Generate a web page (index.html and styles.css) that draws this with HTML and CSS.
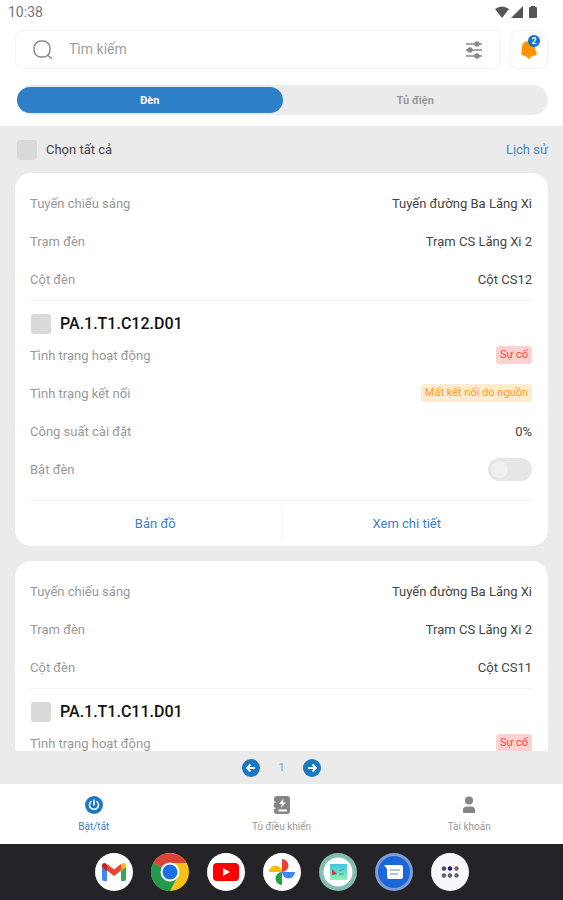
FILE: index.html
```html
<!DOCTYPE html>
<html lang="vi">
<head>
    <meta charset="UTF-8">
    <meta name="viewport" content="width=device-width, initial-scale=1.0">
    <title>Bật/tắt đèn</title>
    <link rel="stylesheet" href="styles.css">
</head>
<body>

    <!-- Status bar -->
    <div class="status-bar">
        <span>10:38</span>
        <div class="status-icons">
            <svg width="14" height="12" viewBox="0 0 14 12"><path d="M0 3Q7-2 14 3L7 12Z" fill="#555"/></svg>
            <svg width="12" height="12" viewBox="0 0 12 12"><path d="M12 0V12H0Z" fill="#555"/></svg>
            <svg class="battery" width="8" height="12" viewBox="0 0 8 12"><path d="M2 0H6V1H7Q8 1 8 2V11Q8 12 7 12H1Q0 12 0 11V2Q0 1 1 1H2Z" fill="#555"/></svg>
        </div>
    </div>

    <header class="header">
        <div class="search-row">
            <div class="search-box">
                <svg width="20" height="20" viewBox="0 0 20 20" fill="none" stroke="#888" stroke-width="1.4" stroke-linecap="round"><rect x="1" y="1" width="16" height="16" rx="7"/><path d="M15 15.500L18.500 18.500"/></svg>
                <input type="text" class="search-input" placeholder="Tìm kiếm" aria-label="Tìm kiếm">
                <button class="icon-btn" aria-label="Bộ lọc">
                    <svg width="18" height="18" viewBox="0 0 18 18" stroke="#888" stroke-width="1.400" fill="#888"><path d="M1 3H17M1 9H17M1 15H17"/><circle cx="12" cy="3" r="2"/><circle cx="5" cy="9" r="2"/><circle cx="12" cy="15" r="2"/></svg>
                </button>
            </div>
            <button class="bell-btn" aria-label="Thông báo">
                <svg width="16" height="18" viewBox="0 0 16 18"><path d="M8 0C12 0 14 2 14 5V8L15.500 11V14L11.500 15L8 18L4.500 15L.5 14V11L1 6C1.500 2 4 0 8 0Z" fill="#ff9300"/></svg>
                <span class="badge">2</span>
            </button>
        </div>
        <div class="tabs">
            <button class="tab active">Đèn</button>
            <button class="tab">Tủ điện</button>
        </div>
    </header>

    <main class="content">
        <div class="select-row">
            <input type="checkbox" class="check" id="selectAll">
            <label for="selectAll">Chọn tất cả</label>
            <a href="#" class="history-link">Lịch sử</a>
        </div>

        <div class="card">
            <div class="row"><span>Tuyến chiếu sáng</span><span class="value">Tuyến đường Ba Lăng Xi</span></div>
            <div class="row"><span>Trạm đèn</span><span class="value">Trạm CS Lăng Xi 2</span></div>
            <div class="row"><span>Cột đèn</span><span class="value">Cột CS12</span></div>
            <div class="lamp-name">
                <input type="checkbox" class="check" id="lamp12">
                <label for="lamp12">PA.1.T1.C12.D01</label>
            </div>
            <div class="row"><span>Tình trạng hoạt động</span><span class="tag tag-error">Sự cố</span></div>
            <div class="row"><span>Tình trạng kết nối</span><span class="tag tag-warning">Mất kết nối do nguồn</span></div>
            <div class="row"><span>Công suất cài đặt</span><span class="value">0%</span></div>
            <div class="row"><label for="switch12">Bật đèn</label><input type="checkbox" class="switch" id="switch12"></div>
            <div class="card-actions">
                <button>Bản đồ</button>
                <button>Xem chi tiết</button>
            </div>
        </div>

        <div class="card">
            <div class="row"><span>Tuyến chiếu sáng</span><span class="value">Tuyến đường Ba Lăng Xi</span></div>
            <div class="row"><span>Trạm đèn</span><span class="value">Trạm CS Lăng Xi 2</span></div>
            <div class="row"><span>Cột đèn</span><span class="value">Cột CS11</span></div>
            <div class="lamp-name">
                <input type="checkbox" class="check" id="lamp11">
                <label for="lamp11">PA.1.T1.C11.D01</label>
            </div>
            <div class="row"><span>Tình trạng hoạt động</span><span class="tag tag-error">Sự cố</span></div>
        </div>
    </main>

    <!-- Pagination -->
    <div class="pagination">
        <button class="icon-btn" aria-label="Trang trước">
            <svg width="18" height="18" viewBox="0 0 18 18"><circle cx="9" cy="9" r="9" fill="#1a78c2"/><path d="M13 9H5.500M8.500 5.500L5 9L8.500 12.500" fill="none" stroke="#fff" stroke-width="1.800"/></svg>
        </button>
        <span>1</span>
        <button class="icon-btn" aria-label="Trang sau">
            <svg width="18" height="18" viewBox="0 0 18 18"><circle cx="9" cy="9" r="9" fill="#1a78c2"/><path d="M5 9H12.500M9.500 5.500L13 9L9.500 12.500" fill="none" stroke="#fff" stroke-width="1.800"/></svg>
        </button>
    </div>

    <nav class="bottom-nav">
        <a href="#" class="nav-item active">
            <svg width="18" height="18" viewBox="0 0 18 18"><circle cx="9" cy="9" r="9" fill="#1a78c2"/><path d="M9 4V9M6 5.500A4.500 4.500 0 1 0 12 5.500" fill="none" stroke="#fff" stroke-width="1.600" stroke-linecap="round"/></svg>
            Bật/tắt
        </a>
        <a href="#" class="nav-item">
            <svg width="18" height="18" viewBox="0 0 18 18"><path d="M4 0H14Q17 0 17 3V15Q17 18 14 18H4Q1 18 1 15V13H2.500V11.500H1V7H2.500V5.500H1V3Q1 0 4 0Z" fill="#858585"/><path d="M10.500 2.500L6 8H9L8 12L13 6.500H10Z" fill="#fff"/><path d="M5.500 14.500H14" stroke="#fff" stroke-width="2"/></svg>
            Tủ điều khiển
        </a>
        <a href="#" class="nav-item">
            <svg width="18" height="18" viewBox="0 0 18 18" fill="#858585"><circle cx="9" cy="4.500" r="4"/><path d="M3 16V14Q3 10.500 7 10.500H11Q15 10.500 15 14V16Q15 17 14 17H4Q3 17 3 16Z"/></svg>
            Tài khoản
        </a>
    </nav>

    <!-- System dock -->
    <div class="dock">
        <button class="app" aria-label="Gmail">
            <svg viewBox="0 0 38 38"><circle cx="19" cy="19" r="19" fill="#fff"/><path d="M7 14V26Q7 28 9 28H12V16Z" fill="#4285f4"/><path d="M26 16V28H29Q31 28 31 26V14Z" fill="#34a853"/><path d="M26 12V18L31 14V12Q30 9 27 10.500Z" fill="#fbbc04"/><path d="M12 12V18L7 14V12Q8 9 11 10.500Z" fill="#c5221f"/><path d="M12 11L19 16.500L26 11V17.500L19 23L12 17.500Z" fill="#ea4335"/></svg>
        </button>
        <button class="app" aria-label="Chrome">
            <svg viewBox="0 0 38 38"><circle cx="19" cy="19" r="19" fill="#fbc116"/><path d="M19 19L2.500 9.500A19 19 0 0 0 19 38L27 23Z" fill="#229a4c"/><path d="M19 19L2.500 9.500A19 19 0 0 1 35.500 10H19Z" fill="#db4437"/><circle cx="19" cy="19" r="9.500" fill="#fff"/><circle cx="19" cy="19" r="7.500" fill="#1a6fe8"/></svg>
        </button>
        <button class="app" aria-label="YouTube">
            <svg viewBox="0 0 38 38"><circle cx="19" cy="19" r="19" fill="#fff"/><rect x="6" y="10" width="26" height="18" rx="4" fill="#f00"/><path d="M16 15L23 19L16 23Z" fill="#fff"/></svg>
        </button>
        <button class="app" aria-label="Google Photos">
            <svg viewBox="0 0 38 38"><circle cx="19" cy="19" r="19" fill="#fff"/><path d="M19 6A6.500 6.500 0 0 1 19 19Z" fill="#ea4335"/><path d="M32 19A6.500 6.500 0 0 1 19 19Z" fill="#4285f4"/><path d="M19 32A6.500 6.500 0 0 1 19 19Z" fill="#1ea446"/><path d="M6 19A6.500 6.500 0 0 1 19 19Z" fill="#fbbc04"/></svg>
        </button>
        <button class="app" aria-label="Chiếu sáng">
            <svg viewBox="0 0 38 38"><defs><linearGradient id="sky" x2="0" y2="1"><stop offset="0" stop-color="#3fc3dc"/><stop offset="1" stop-color="#8ef5b4"/></linearGradient></defs><circle cx="19" cy="19" r="19" fill="#83bdb2"/><circle cx="19" cy="19" r="14.500" fill="#fff"/><rect x="11" y="11" width="17" height="16" fill="url(#sky)"/><path d="M13 16L18 21L13 22Z" fill="#c33a3d"/><path d="M20 18L25 16M20 21H25" stroke="#5a9c8a" fill="none"/></svg>
        </button>
        <button class="app" aria-label="Tin nhắn">
            <svg viewBox="0 0 38 38"><circle cx="19" cy="19" r="19" fill="#7b9fd0"/><circle cx="19" cy="19" r="16" fill="#1b66d9"/><path d="M9 12H26Q28 12 28 14V24Q28 26 26 26H14Q12 26 12 24V16Z" fill="#fff"/><path d="M15 17H25M15 21H23" stroke="#8aaeea" stroke-width="1.500"/></svg>
        </button>
        <button class="app" aria-label="Tất cả ứng dụng">
            <svg viewBox="0 0 38 38"><circle cx="19" cy="19" r="19" fill="#f8f7fd"/><g fill="#62606f"><circle cx="13" cy="15.500" r="2.200" fill="#3f4a7c"/><circle cx="19" cy="15.500" r="2.200" fill="#1c1c78"/><circle cx="25.500" cy="15.500" r="2.200" fill="#85566a"/><circle cx="13" cy="22.500" r="2.200"/><circle cx="19" cy="22.500" r="2.200"/><circle cx="25.500" cy="22.500" r="2.200"/></g></svg>
        </button>
    </div>

</body>
</html>
```
FILE: styles.css
```css
* {
    box-sizing: border-box;
}

body {
    font-family: Roboto, Arial, sans-serif;
    font-size: 13px;
    color: #444444;
    background-color: #ffffff;
    margin: 0;
    height: 100vh;
    display: flex;
    flex-direction: column;
}

button, input {
    font-family: inherit;
    font-size: inherit;
    margin: 0;
    padding: 0;
    border: none;
    background: none;
}

button {
    cursor: pointer;
}

a {
    text-decoration: none;
}

svg {
    display: block;
}

.status-bar {
    display: flex;
    justify-content: space-between;
    align-items: center;
    height: 24px;
    padding: 0 26px 0 8px;
    font-size: 14px;
    color: #777777;
}

.status-icons {
    display: flex;
    gap: 2px;
}

.battery {
    margin-left: 4px;
}

/* Search and tabs */
.header {
    padding: 6px 15px 11px;
}

.search-row {
    display: flex;
    gap: 9px;
}

.search-box {
    flex: 1;
    display: flex;
    align-items: center;
    gap: 16px;
    height: 39px;
    padding: 0 17px;
    border: 1px solid #f3f3f3;
    border-radius: 8px;
}

.search-input {
    flex: 1;
    min-width: 0;
    padding-bottom: 2px;
    outline: none;
    font-size: 14px;
}

.search-input::placeholder {
    color: #a0a0a0;
}

.bell-btn {
    position: relative;
    display: flex;
    align-items: center;
    justify-content: center;
    width: 38px;
    height: 39px;
    border: 1px solid #f3f3f3;
    border-radius: 8px;
}

.badge {
    position: absolute;
    top: 4px;
    right: 7px;
    width: 12px;
    height: 12px;
    border-radius: 50%;
    background-color: #1a6fc4;
    color: #ffffff;
    font-size: 9px;
    font-weight: bold;
    line-height: 12px;
    text-align: center;
}

.tabs {
    display: flex;
    height: 30px;
    margin: 16px 0 0 2px;
    border-radius: 15px;
    background-color: #ebebeb;
}

.tab {
    flex: 1;
    border-radius: 15px;
    font-size: 11px;
    font-weight: bold;
    color: #999999;
}

.tab.active {
    margin: 2px 0;
    background-color: #2d80c8;
    color: #ffffff;
}

/* Lamp list */
.content {
    flex: 1;
    min-height: 0;
    overflow: hidden;
    padding: 0 15px;
    background-color: #ebebeb;
}

.select-row {
    display: flex;
    align-items: center;
    gap: 9px;
    height: 47px;
    padding-left: 2px;
}

.history-link {
    margin-left: auto;
    color: #4a86cc;
}

.check {
    appearance: none;
    width: 20px;
    height: 20px;
    border-radius: 3px;
    background-color: #d9d9d9;
}

.check:checked {
    background-color: #2d80c8;
}

.card {
    margin-bottom: 15px;
    padding: 11px 16px 0 15px;
    border-radius: 16px;
    background-color: #ffffff;
}

.row {
    display: flex;
    justify-content: space-between;
    align-items: center;
    height: 38px;
    color: #999999;
}

.value {
    color: #444444;
}

.lamp-name {
    display: flex;
    align-items: center;
    gap: 9px;
    height: 36px;
    margin-top: 2px;
    padding: 10px 0 0 1px;
    border-top: 1px solid #f3f3f3;
    font-size: 16px;
    font-weight: 500;
    color: #111111;
}

.tag {
    padding: 0 4px;
    border-radius: 3px;
    font-size: 11px;
    line-height: 18px;
}

.tag-error {
    background-color: #ffd2d2;
    color: #ff4444;
}

.tag-warning {
    background-color: #ffebd0;
    color: #ff9a1f;
}

.switch {
    appearance: none;
    width: 44px;
    height: 23px;
    padding: 3px;
    border-radius: 12px;
    background-color: #e6e6e6;
}

.switch::before {
    content: "";
    display: block;
    width: 17px;
    height: 17px;
    border-radius: 50%;
    background-color: #f0f0f0;
}

.switch:checked {
    background-color: #2d80c8;
}

.card-actions {
    display: flex;
    height: 46px;
    margin-top: 12px;
    border-top: 1px solid #f3f3f3;
}

.card-actions button {
    flex: 1;
    margin: 6px 0;
    color: #3a7fcc;
}

.card-actions button + button {
    border-left: 1px solid #f3f3f3;
}

/* Pagination */
.pagination {
    display: flex;
    justify-content: center;
    align-items: center;
    gap: 18px;
    height: 33px;
    background-color: #ebebeb;
    color: #6f9fdc;
    font-size: 11px;
}

/* Bottom navigation */
.bottom-nav {
    display: flex;
    height: 60px;
}

.nav-item {
    flex: 1;
    display: flex;
    flex-direction: column;
    align-items: center;
    gap: 7px;
    padding-top: 12px;
    font-size: 10px;
    color: #999999;
}

.nav-item.active {
    color: #3a7fcc;
}

.dock {
    display: flex;
    justify-content: center;
    align-items: center;
    gap: 18px;
    height: 56px;
    background-color: #242428;
}

.app {
    width: 38px;
    height: 38px;
}
```
